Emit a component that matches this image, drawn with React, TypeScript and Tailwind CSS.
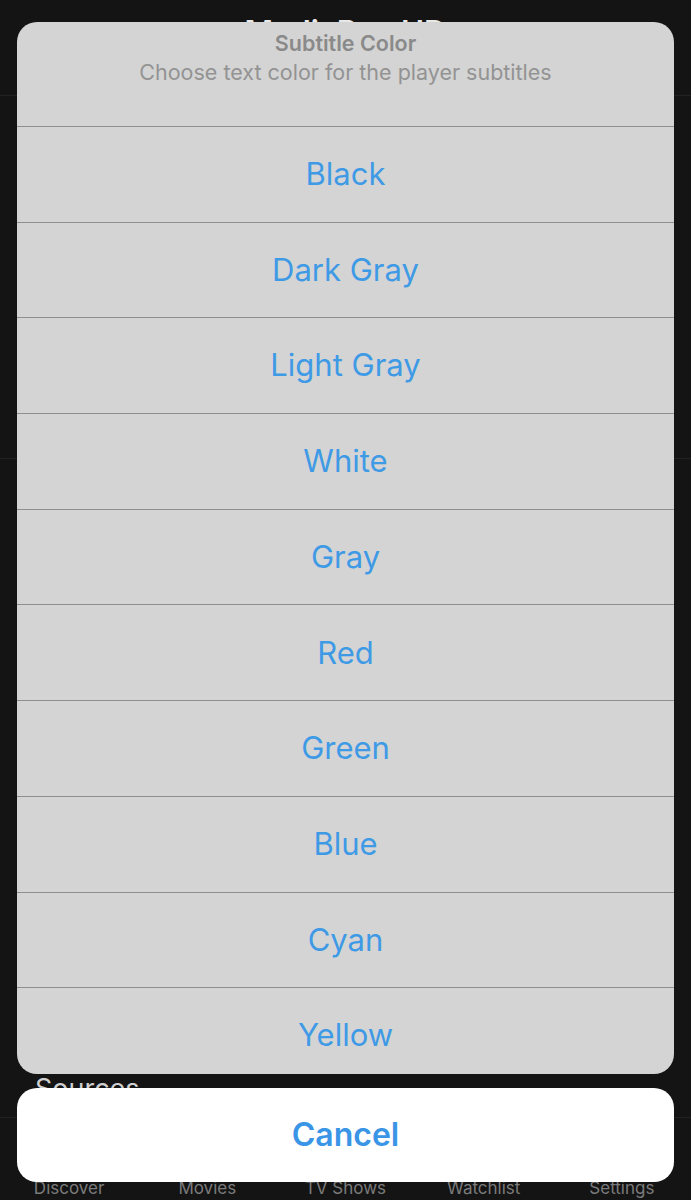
const options = [
  'Black',
  'Dark Gray',
  'Light Gray',
  'White',
  'Gray',
  'Red',
  'Green',
  'Blue',
  'Cyan',
  'Yellow',
];

const tabs = ['Discover', 'Movies', 'TV Shows', 'Watchlist', 'Settings'];

export default function App() {
  return (
    <div
      className="relative w-[691px] h-[1200px] overflow-hidden bg-[#141414]"
      style={{ fontFamily: 'Inter, "Liberation Sans", sans-serif' }}
    >
      {/* page behind the sheet */}
      <div className="flex flex-col h-full">
        <div className="pt-[16px] text-center text-[31px] font-semibold text-[#e8e8e8] leading-none">
          MediaBox HD
        </div>
        <div className="mt-[48px] border-t border-[#222]" />
        <div className="mt-[362px] border-t border-[#222]" />
        <div className="flex-1" />
        <div className="pl-[35px] text-[27px] text-[#cfcfcf] leading-none mb-[15px]">Sources</div>
        <div className="border-t border-[#222] mb-[62px]" />
        <div className="grid grid-cols-5 text-center text-[17px] text-[#7b7b7b] leading-none mb-[3px]">
          {tabs.map((t) => (
            <div key={t} className="h-[17px]">
              {t}
            </div>
          ))}
        </div>
      </div>

      {/* action sheet */}
      <div className="absolute inset-0 flex flex-col px-[17px] pt-[22px]">
        <div className="h-[1052px] rounded-[20px] bg-[#d4d4d4] overflow-hidden">
          <div className="h-[104px] flex flex-col items-center pt-[9px]">
            <div className="text-[21.5px] font-semibold text-[#8a8a8a] leading-[24px]">Subtitle Color</div>
            <div className="text-[21.5px] text-[#939393] leading-[24px] mt-[5px]">
              Choose text color for the player subtitles
            </div>
          </div>
          {options.map((o) => (
            <div
              key={o}
              className="h-[95.7px] border-t border-[#8f8f8f] flex items-center justify-center text-[31px] text-[#3f9ae6]"
            >
              {o}
            </div>
          ))}
        </div>
        <div className="mt-[14px] h-[94px] rounded-[20px] bg-white flex items-center justify-center text-[32px] font-semibold text-[#3a95e6]">
          Cancel
        </div>
      </div>
    </div>
  );
}
